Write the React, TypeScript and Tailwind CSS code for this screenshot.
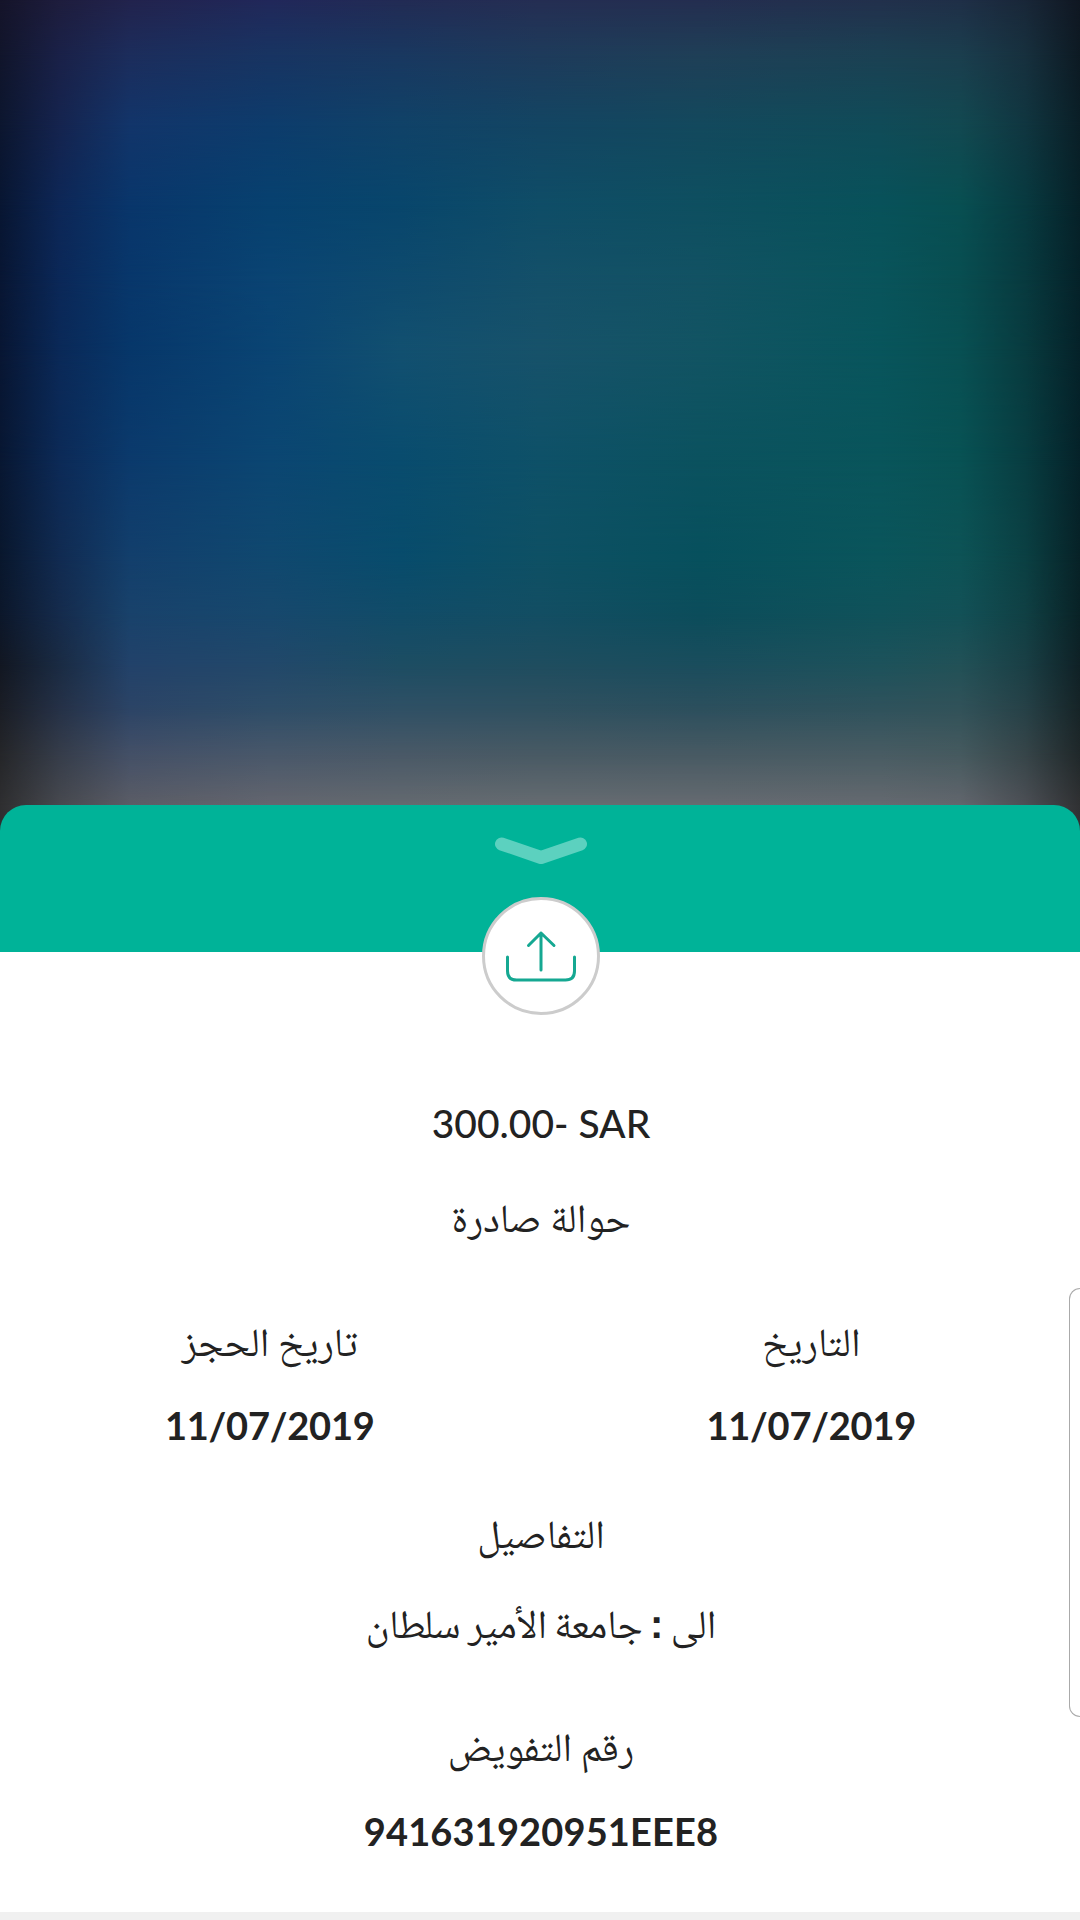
import React from "react";

// colour samples of the blurred backdrop, one row per height
const stopsX = [0, 60, 130, 270, 400, 540, 700, 880, 960, 1025, 1080];

const rows = [
  { y: 0, colors: ["#15142a", "#1e1d3d", "#22234d", "#21285a", "#222b54", "#252e53", "#242e50", "#22304c", "#1f2f47", "#192738", "#101722"] },
  { y: 55, colors: ["#11152b", "#1a2148", "#1c2d5c", "#183462", "#193860", "#1e3b5b", "#1f3f57", "#1b4153", "#1b3e4e", "#17303e", "#0d1a23"] },
  { y: 125, colors: ["#0c162f", "#15244f", "#12356a", "#0d3c6c", "#104268", "#134563", "#13495d", "#104b58", "#124951", "#103640", "#0a1f27"] },
  { y: 205, colors: ["#081632", "#0d2757", "#09366b", "#07416f", "#08466c", "#0f4d67", "#0e4f60", "#08525a", "#084f52", "#083a40", "#062128"] },
  { y: 280, colors: ["#081633", "#0b2858", "#08376b", "#0a4473", "#0e4a6e", "#145069", "#125263", "#09545b", "#084e51", "#083a3f", "#052229"] },
  { y: 350, colors: ["#081633", "#0a2958", "#07376a", "#0a4473", "#125070", "#17526a", "#125463", "#08555c", "#085053", "#083b3f", "#052229"] },
  { y: 460, colors: ["#081732", "#0c2a57", "#0b3a6c", "#0b4672", "#094c6e", "#0e5168", "#0b525f", "#09555b", "#085254", "#083d41", "#052229"] },
  { y: 560, colors: ["#09172d", "#112b51", "#133f6c", "#10486f", "#084c6c", "#0e5064", "#07505d", "#0a555b", "#0d5356", "#0b4043", "#072227"] },
  { y: 615, colors: ["#0c172a", "#152b4c", "#19426b", "#17486d", "#114c68", "#134e63", "#0c4d5b", "#10525a", "#135157", "#104044", "#092226"] },
  { y: 665, colors: ["#121722", "#1a2b43", "#22426a", "#22486a", "#1d4d63", "#1f4d5f", "#1a4d5d", "#1d525b", "#225157", "#1a3f45", "#0f2126"] },
  { y: 708, colors: ["#1a1d25", "#253147", "#2c4466", "#2e4d68", "#2f5065", "#2f5060", "#2c4f5d", "#2f525c", "#315259", "#264147", "#162427"] },
  { y: 755, colors: ["#252629", "#363d4a", "#445067", "#49586a", "#4a5967", "#495a64", "#485a63", "#495c63", "#465a5f", "#374549", "#20282a"] },
  { y: 805, colors: ["#2e2e30", "#47494f", "#5b5d66", "#64666f", "#646a70", "#666c71", "#666b71", "#656a70", "#62666d", "#4c4f55", "#303133"] },
];

function Backdrop() {
  return (
    <div className="col-start-1 row-start-1 grid h-[840px] w-full overflow-hidden">
      {rows.map((row, i) => {
        const from = i === 0 ? 0 : rows[i - 1].y;
        const colors = row.colors.map((c, n) => `${c} ${stopsX[n]}px`).join(", ");
        return (
          <div
            key={row.y}
            className="col-start-1 row-start-1"
            style={{
              backgroundImage: `linear-gradient(to right, ${colors})`,
              maskImage: i === 0 ? "none" : `linear-gradient(to bottom, transparent ${from}px, black ${row.y}px)`,
            }}
          />
        );
      })}
    </div>
  );
}

function Label({ children }: { children: React.ReactNode }) {
  return (
    <p dir="rtl" className="h-[60px] whitespace-nowrap text-center font-['Noto_Naskh_Arabic','Noto_Sans',serif] text-[40px] leading-[60px]">
      {children}
    </p>
  );
}

function Value({ children }: { children: React.ReactNode }) {
  return (
    <p className="h-[48px] whitespace-nowrap text-center font-['Lato',sans-serif] text-[38px] font-bold leading-[48px]">
      {children}
    </p>
  );
}

export default function App() {
  return (
    <div className="grid h-[1920px] w-[1080px] overflow-hidden bg-white text-[#222]">
      <Backdrop />
      <main className="relative col-start-1 row-start-1 flex flex-col pt-[805px]">
        <header className="flex h-[147px] flex-col items-center rounded-t-[26px] bg-[#00b398] pl-[2px] pt-[32px]">
          <svg width="94" height="30" viewBox="0 0 94 30" fill="none" className="shrink-0">
            <path d="M7.500 7L47 20.500L86.500 7" stroke="#5cd1bf" strokeWidth="13" strokeLinecap="round" strokeLinejoin="round" />
          </svg>
        </header>
        <button className="absolute left-[482px] top-[897px] flex size-[118px] items-center justify-center rounded-full border-3 border-[#ccc] bg-white pt-[2px]">
          <svg width="72" height="54" viewBox="0 0 72 54" fill="none" stroke="#15a892" strokeWidth="3" strokeLinecap="round" strokeLinejoin="round">
            <path d="M36 40V3M23.500 15.500L36 3L49 15.500" />
            <path d="M2.500 27V41Q2.500 50 11.500 50H60.500Q69.500 50 69.500 41V27" />
          </svg>
        </button>

        <section className="flex grow flex-col bg-white pl-[2px] pt-[147px]">
          <p className="h-[48px] text-center font-['Lato',sans-serif] text-[39px] font-medium leading-[48px]">300.00- SAR</p>
          <div className="mt-[46px]">
            <Label>حوالة صادرة</Label>
          </div>
          <div dir="rtl" className="-ml-[3px] -mr-[2px] mt-[64px] grid grid-cols-2">
            <div>
              <Label>التاريخ</Label>
              <div className="mt-[24px] tracking-[-0.2px]" dir="ltr">
                <Value>11/07/2019</Value>
              </div>
            </div>
            <div>
              <Label>تاريخ الحجز</Label>
              <div className="mt-[24px] tracking-[-0.2px]" dir="ltr">
                <Value>11/07/2019</Value>
              </div>
            </div>
          </div>
          <div className="mt-[60px]">
            <Label>التفاصيل</Label>
          </div>
          <div className="mt-[25px] [word-spacing:-1.5px]">
            <Label>
              الى <span className="font-['Liberation_Sans',sans-serif] text-[40px] font-bold">:</span> جامعة الأمير سلطان
            </Label>
          </div>
          <div className="mt-[68px]">
            <Label>رقم التفويض</Label>
          </div>
          <div className="mt-[25px] tracking-[0.15px]">
            <Value>941631920951EEE8</Value>
          </div>
        </section>
        <footer className="h-[8px] bg-[#f0f0f0]" />
        {/* edge panel handle */}
        <div className="absolute right-0 top-[1288px] h-[429px] w-[11px] rounded-l-[16px] border border-r-0 border-[#aaa] bg-white" />
      </main>
    </div>
  );
}
